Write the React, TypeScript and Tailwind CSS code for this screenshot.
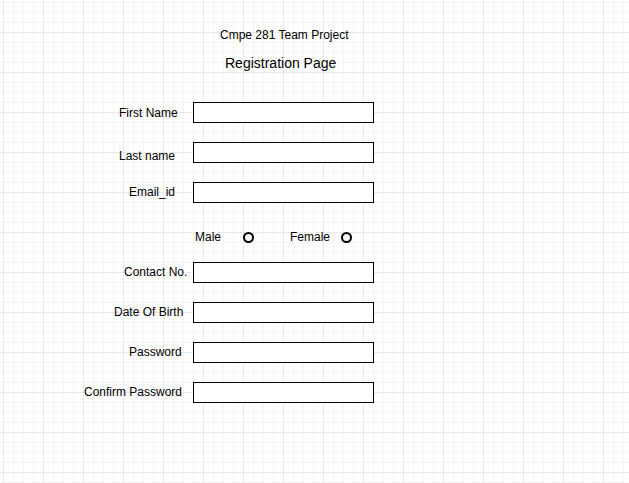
const fields = [
  { label: "First Name", left: "ml-[119px]", pad: "pt-[4px]" },
  { label: "Last name", left: "ml-[119px]", pad: "pt-[7px]" },
  { label: "Email_id", left: "ml-[129px]", pad: "pt-[3px]" },
];

const moreFields = [
  { label: "Contact No.", left: "ml-[124px]", pad: "pt-[3px]" },
  { label: "Date Of Birth", left: "ml-[114px]", pad: "pt-[3px]" },
  { label: "Password", left: "ml-[129px]", pad: "pt-[3px]" },
  { label: "Confirm Password", left: "ml-[84px]", pad: "pt-[3px]" },
];

type Field = { label: string; left: string; pad: string };

const FieldRow = ({ field, first }: { field: Field; first?: boolean }) => (
  <div className={`flex h-[21px] ${first ? "" : "mt-[19px]"}`}>
    <div className={`w-[193px] shrink-0 ${field.pad}`}>
      <span className={`block whitespace-nowrap ${field.left}`}>{field.label}</span>
    </div>
    <div className="w-[181px] h-[21px] border border-black bg-white" />
  </div>
);

const Radio = () => (
  <div className="mt-[2px] w-[11px] h-[11px] rounded-full border-2 border-black bg-white" />
);

export default function App() {
  return (
    <div
      className="min-h-screen w-full bg-white text-black text-[12px] leading-[14px] bg-[linear-gradient(to_right,#e8e8e8_1px,transparent_1px),linear-gradient(to_bottom,#e8e8e8_1px,transparent_1px),linear-gradient(to_right,#f4f4f4_1px,transparent_1px),linear-gradient(to_bottom,#f4f4f4_1px,transparent_1px)] bg-[size:40px_40px,40px_40px,10px_10px,10px_10px] bg-[position:3px_32px,3px_32px,3px_2px,3px_2px]"
      style={{ fontFamily: '"Liberation Sans", Arial, sans-serif' }}
    >
      <div className="flex flex-col pt-[28px] pb-[60px]">
        <p className="ml-[220px] whitespace-nowrap">Cmpe 281 Team Project</p>
        <p className="ml-[225px] mt-[13px] text-[14px] leading-[16px] whitespace-nowrap">
          Registration Page
        </p>

        <div className="mt-[31px] flex flex-col">
          {fields.map((f, i) => (
            <FieldRow key={f.label} field={f} first={i === 0} />
          ))}
        </div>

        <div className="mt-[27px] flex items-start h-[14px]">
          <span className="ml-[195px] w-[48px]">Male</span>
          <Radio />
          <span className="ml-[36px] w-[51px]">Female</span>
          <Radio />
        </div>

        <div className="mt-[18px] flex flex-col">
          {moreFields.map((f, i) => (
            <FieldRow key={f.label} field={f} first={i === 0} />
          ))}
        </div>
      </div>
    </div>
  );
}
